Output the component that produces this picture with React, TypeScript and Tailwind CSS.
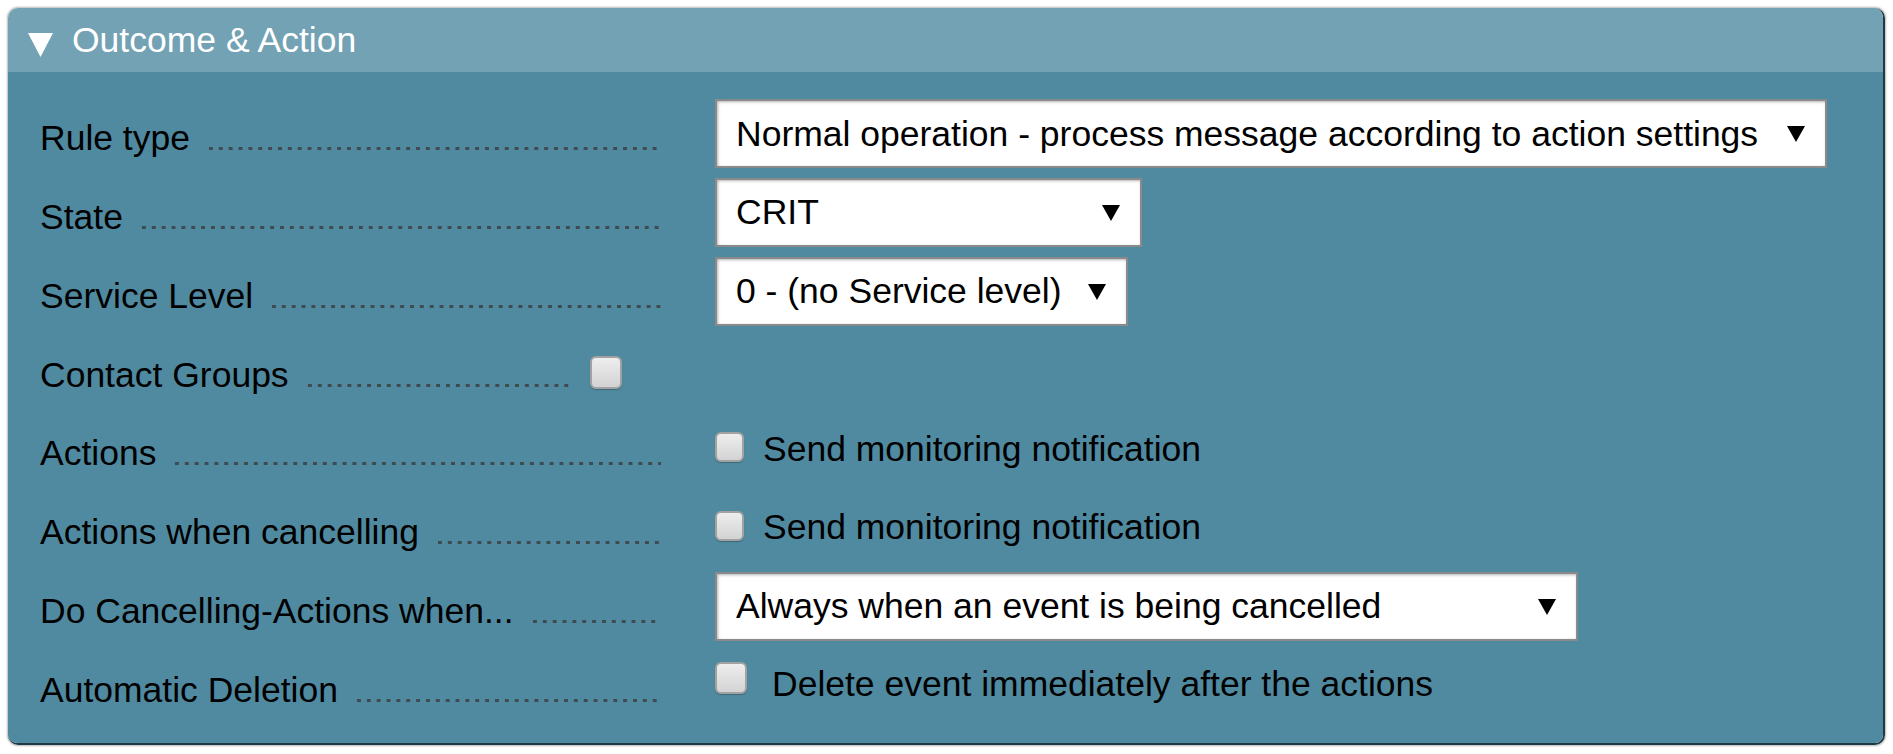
import React from "react";

function Arrow() {
  return (
    <svg width="18" height="17" viewBox="0 0 18 17" className="shrink-0">
      <polygon points="0,1 18,1 9,17" fill="#000" />
    </svg>
  );
}

function SelectBox({ text, width }: { text: string; width: string }) {
  return (
    <div
      className={`mt-[4px] h-[69px] ${width} bg-white border-2 border-[#8a8a8a] shadow-[inset_1px_1px_3px_rgba(0,0,0,0.3)] flex items-center justify-between pl-[19px] pr-[20px]`}
    >
      <span className="whitespace-nowrap leading-[40px]">{text}</span>
      <Arrow />
    </div>
  );
}

function Check({ size }: { size: string }) {
  return (
    <div
      className={`${size} shrink-0 rounded-[6px] border-2 border-[#a2a2a2] bg-linear-to-b from-[#eeeeee] to-[#d3d3d3] shadow-[0_1px_1px_rgba(0,0,0,0.25)]`}
    />
  );
}

function Dots() {
  return (
    <div className="mt-[23.3px] ml-[16px] h-[40px] flex-1 bg-[linear-gradient(to_right,transparent_3.3px,#3f4b51_3.3px,#3f4b51_6.6px,transparent_6.6px)] bg-[length:9.87px_3.3px] bg-[position:0_29px] bg-repeat-x" />
  );
}

function Row({
  label,
  children,
  extra,
}: {
  label: string;
  children?: React.ReactNode;
  extra?: React.ReactNode;
}) {
  return (
    <div className="flex h-[78.75px]">
      <div className="w-[621px] flex items-start shrink-0">
        <span className="mt-[23.3px] whitespace-nowrap leading-[40px]">{label}</span>
        <Dots />
        {extra}
      </div>
      <div className="ml-[54px] flex items-start">{children}</div>
    </div>
  );
}

export default function App() {
  return (
    <div
      className="w-[1893px] h-[754px] bg-white p-[8px] text-black text-[35.5px]"
      style={{ fontFamily: '"Liberation Sans", Arial, sans-serif' }}
    >
      <div className="h-[737px] rounded-[10px] overflow-hidden border-r-2 border-b-2 border-[#1d3a46] shadow-[0_0_2px_1px_rgba(0,0,0,0.28)] flex flex-col">
        <div className="h-[64px] bg-[#73a2b5] flex items-start shrink-0">
          <svg width="25" height="24" viewBox="0 0 25 24" className="ml-[20px] mt-[25px] shrink-0">
            <polygon points="0,0 25,0 12.5,24" fill="#fff" />
          </svg>
          <span className="ml-[19px] mt-[11.5px] leading-[40px] text-white whitespace-nowrap">
            Outcome &amp; Action
          </span>
        </div>
        <div className="flex-1 bg-[#508aa0] pt-[23px] pl-[32px]">
          <Row label="Rule type">
            <SelectBox
              width="w-[1112px]"
              text="Normal operation - process message according to action settings"
            />
          </Row>
          <Row label="State">
            <SelectBox width="w-[427px]" text="CRIT" />
          </Row>
          <Row label="Service Level">
            <SelectBox width="w-[413px]" text="0 - (no Service level)" />
          </Row>
          <Row
            label="Contact Groups"
            extra={
              <div className="mt-[24.75px] ml-[18px] mr-[39px]">
                <Check size="w-[32px] h-[33px]" />
              </div>
            }
          />
          <Row label="Actions">
            <div className="mt-[22px]">
              <Check size="w-[29px] h-[30px]" />
            </div>
            <span className="mt-[18.7px] ml-[19px] leading-[40px] whitespace-nowrap">
              Send monitoring notification
            </span>
          </Row>
          <Row label="Actions when cancelling">
            <div className="mt-[22px]">
              <Check size="w-[29px] h-[30px]" />
            </div>
            <span className="mt-[18.7px] ml-[19px] leading-[40px] whitespace-nowrap">
              Send monitoring notification
            </span>
          </Row>
          <Row label="Do Cancelling-Actions when...">
            <SelectBox width="w-[863px]" text="Always when an event is being cancelled" />
          </Row>
          <Row label="Automatic Deletion">
            <div className="mt-[15.75px]">
              <Check size="w-[32px] h-[32px]" />
            </div>
            <span className="mt-[17.4px] ml-[25px] leading-[40px] whitespace-nowrap">
              Delete event immediately after the actions
            </span>
          </Row>
        </div>
      </div>
    </div>
  );
}
